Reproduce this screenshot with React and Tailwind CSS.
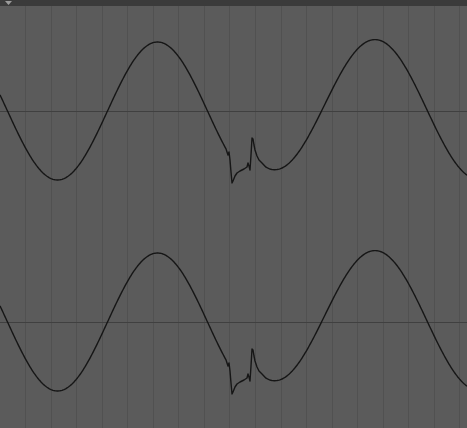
import React from "react";

const W = 467;
const H = 422;

// first segment, before the glitch
const before = (x) => 111 - 69 * Math.sin((2 * Math.PI * (x - 107.5)) / 200);
// after the glitch, with a slow recovery offset
const after = (x) =>
  111 - 69 * Math.sin((2 * Math.PI * (x - 324)) / 206) - 14 * Math.exp(-(x - 252) / 70);

const glitch = [
  [227, 152], [228, 155], [229, 152], [230, 160], [231, 172], [232, 183], [233, 181],
  [235, 176], [237, 173], [240, 171], [244, 169], [247, 167], [248, 163], [249, 166],
  [250, 170], [251, 155], [252, 138], [253, 139], [254, 145], [255, 150], [257, 156],
  [259, 160], [262, 163],
];

function buildPoints() {
  const pts = [];
  for (let x = 0; x <= 226; x += 1) pts.push([x, before(x)]);
  glitch.forEach((p) => pts.push(p));
  for (let x = 266; x <= W; x += 1) pts.push([x, after(x)]);
  return pts;
}

const POINTS = buildPoints();

function wavePath(dy) {
  return POINTS.map(([x, y], i) => `${i ? "L" : "M"}${x} ${(y + dy - 6).toFixed(2)}`).join(" ");
}

const gridX = Array.from({ length: 18 }, (_, k) => Math.round(25 + 25.55 * k));

function Scope() {
  return (
    <svg width={W} height={H} viewBox={`0 0 ${W} ${H}`} className="block">
      <rect width={W} height={H} fill="#5b5b5b" />
      {gridX.map((x) => (
        <rect key={x} x={x} y={0} width={1} height={H} fill="#515151" />
      ))}
      <rect x={0} y={105} width={W} height={1} fill="#404040" />
      <rect x={0} y={316} width={W} height={1} fill="#404040" />
      <path d={wavePath(0)} fill="none" stroke="#161616" strokeWidth="1.4" strokeLinejoin="round" />
      <path d={wavePath(211)} fill="none" stroke="#161616" strokeWidth="1.4" strokeLinejoin="round" />
    </svg>
  );
}

export default function App() {
  return (
    <div className="flex h-[428px] w-[467px] flex-col overflow-hidden bg-[#5b5b5b]">
      <div className="flex h-[6px] shrink-0 items-start bg-[#3b3b3b] pl-[5px]">
        <svg width="7" height="4" viewBox="0 0 7 4" className="mt-[1px]">
          <polygon points="0,0 7,0 3.5,4" fill="#9c9c9c" />
        </svg>
      </div>
      <Scope />
    </div>
  );
}
